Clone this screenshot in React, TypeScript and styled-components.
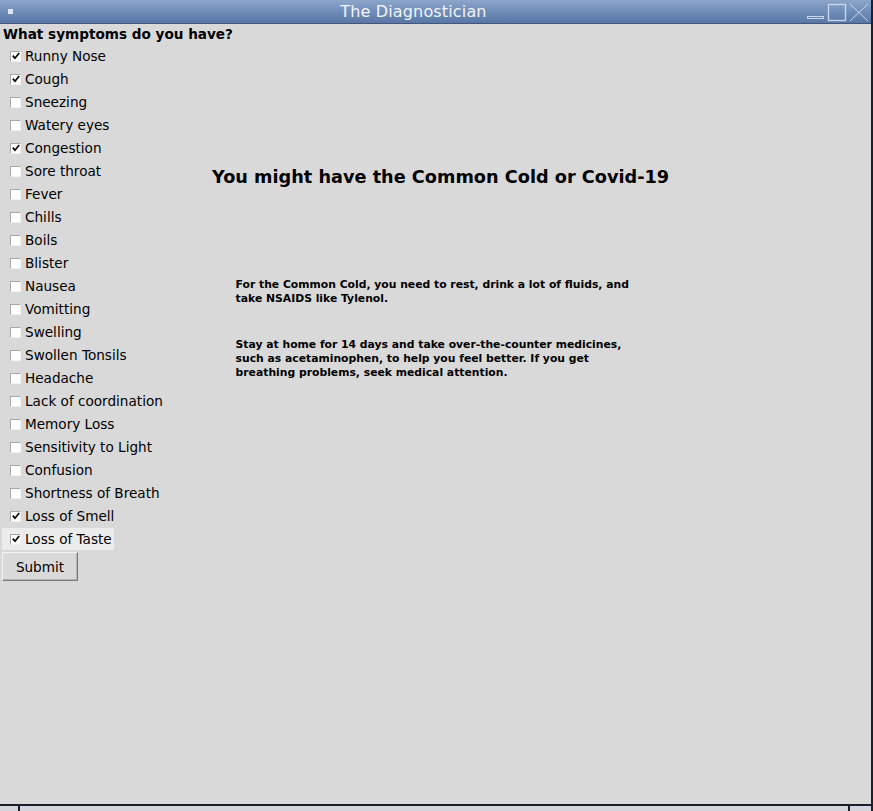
import { useState } from "react";
import styled, { createGlobalStyle } from "styled-components";

const GlobalStyle = createGlobalStyle`
  html, body {
    margin: 0;
    padding: 0;
    background: #d9d9d9;
    overflow: hidden;
  }
  * {
    box-sizing: border-box;
  }
`;

const SYMPTOMS = [
  "Runny Nose",
  "Cough",
  "Sneezing",
  "Watery eyes",
  "Congestion",
  "Sore throat",
  "Fever",
  "Chills",
  "Boils",
  "Blister",
  "Nausea",
  "Vomitting",
  "Swelling",
  "Swollen Tonsils",
  "Headache",
  "Lack of coordination",
  "Memory Loss",
  "Sensitivity to Light",
  "Confusion",
  "Shortness of Breath",
  "Loss of Smell",
  "Loss of Taste",
];

const INITIAL = ["Runny Nose", "Cough", "Congestion", "Loss of Smell", "Loss of Taste"];

const App = () => {
  const [checked, setChecked] = useState<string[]>(INITIAL);

  const toggle = (name: string) => {
    setChecked((prev) =>
      prev.includes(name) ? prev.filter((n) => n !== name) : [...prev, name]
    );
  };

  return (
    <Window>
      <GlobalStyle />
      <TitleBar>
        <MenuDot />
        <Title>The Diagnostician</Title>
        <Controls width="66" height="24" viewBox="0 0 66 24">
          <rect x="2.5" y="16.5" width="16" height="2" fill="none" stroke="#c9d6ec" strokeWidth="1" />
          <rect x="23.5" y="4.5" width="17" height="16" fill="none" stroke="#c9d6ec" strokeWidth="1.4" />
          <path d="M45 4 L63 21 M63 4 L45 21" stroke="#c9d6ec" strokeWidth="1" />
        </Controls>
      </TitleBar>

      <Body>
        <Symptoms>
          <Question>What symptoms do you have?</Question>
          {SYMPTOMS.map((name) => (
            <CheckRow
              key={name}
              $active={name === "Loss of Taste"}
              onClick={() => toggle(name)}
            >
              <Box>{checked.includes(name) && <Tick />}</Box>
              <span>{name}</span>
            </CheckRow>
          ))}
          <SubmitButton>Submit</SubmitButton>
        </Symptoms>

        <Result>
          <Diagnosis>You might have the Common Cold or Covid-19</Diagnosis>
          <Advice $gap={0}>
            For the Common Cold, you need to rest, drink a lot of fluids, and
            take NSAIDS like Tylenol.
          </Advice>
          <Advice $gap={32}>
            Stay at home for 14 days and take over-the-counter medicines, such
            as acetaminophen, to help you feel better. If you get breathing
            problems, seek medical attention.
          </Advice>
        </Result>
      </Body>

      <BottomFrame>
        <FrameCell $width={20} />
        <FrameCell $width={830} />
        <FrameCell $width={21} />
      </BottomFrame>
    </Window>
  );
};

const Tick = () => (
  <svg width="8" height="8" viewBox="0 0 8 8">
    <path d="M0.8 3.6 L3 6.2 L7.2 1" fill="none" stroke="#000" strokeWidth="1.7" />
  </svg>
);

export default App;

const Window = styled.div`
  width: 873px;
  height: 811px;
  display: flex;
  flex-direction: column;
  border-right: 2px solid #1c1f2b;
  font-family: "DejaVu Sans", "Liberation Sans", sans-serif;
  color: #000;
`;

const TitleBar = styled.div`
  position: relative;
  height: 24px;
  flex: none;
  display: flex;
  align-items: center;
  justify-content: center;
  background: linear-gradient(#8ca5cb, #6e8bb6 55%, #5877a5);
  border-bottom: 1px solid #44577a;
`;

const MenuDot = styled.div`
  position: absolute;
  left: 8px;
  top: 9px;
  width: 5px;
  height: 5px;
  background: #dfe6f3;
`;

const Title = styled.div`
  margin: 0 44px 0 0;
  font-size: 16px;
  color: #f2f4f8;
  letter-spacing: 0.15px;
`;

const Controls = styled.svg`
  position: absolute;
  right: 0;
  top: 0;
`;

const Body = styled.div`
  flex: 1;
  display: grid;
  grid-template-columns: 210px auto;
  align-items: start;
  background: #d9d9d9;
`;

const Symptoms = styled.div`
  display: flex;
  flex-direction: column;
  align-items: flex-start;
  padding: 1px 0 0 2px;
`;

const Question = styled.div`
  padding-left: 1px;
  font-size: 13.6px;
  font-weight: bold;
  line-height: 18px;
  margin-bottom: 2px;
  white-space: nowrap;
`;

const CheckRow = styled.label<{ $active?: boolean }>`
  display: flex;
  align-items: center;
  height: 22px;
  margin-bottom: 1px;
  padding: 0 2px 0 8px;
  font-size: 13.6px;
  white-space: nowrap;
  background: ${(p) => (p.$active ? "#ececec" : "transparent")};
  cursor: pointer;
  user-select: none;
`;

const Box = styled.span`
  width: 11px;
  height: 11px;
  margin-right: 4px;
  display: flex;
  align-items: center;
  justify-content: center;
  background: #fff;
  border: 1px solid #f2f2f2;
  border-top-color: #a8a8a8;
  border-left-color: #a8a8a8;
`;

const SubmitButton = styled.button`
  margin-top: 1px;
  width: 76px;
  height: 29px;
  padding: 0;
  font-family: "DejaVu Sans", "Liberation Sans", sans-serif;
  font-size: 13.6px;
  color: #000;
  background: #d9d9d9;
  border: 1px solid;
  border-color: #f4f4f4 #7a7a7a #7a7a7a #f4f4f4;
  box-shadow: inset -1px -1px 0 #b4b4b4;
`;

const Result = styled.div`
  display: flex;
  flex-direction: column;
  align-items: center;
  width: fit-content;
  padding: 143px 0 0 2px;
`;

const Diagnosis = styled.h1`
  margin: 0 0 90px;
  font-size: 17.7px;
  font-weight: bold;
  line-height: 21px;
  white-space: nowrap;
`;

const Advice = styled.p<{ $gap: number }>`
  width: 410px;
  margin: ${(p) => p.$gap}px 0 0;
  font-size: 10.8px;
  font-weight: bold;
  line-height: 14px;
`;

const BottomFrame = styled.div`
  height: 7px;
  flex: none;
  display: flex;
  border-top: 2px solid #1c1f2b;
  background: #d3d6dc;
`;

const FrameCell = styled.div<{ $width: number }>`
  width: ${(p) => p.$width}px;
  border-right: 2px solid #1c1f2b;
  &:last-child {
    border-right: none;
  }
`;
